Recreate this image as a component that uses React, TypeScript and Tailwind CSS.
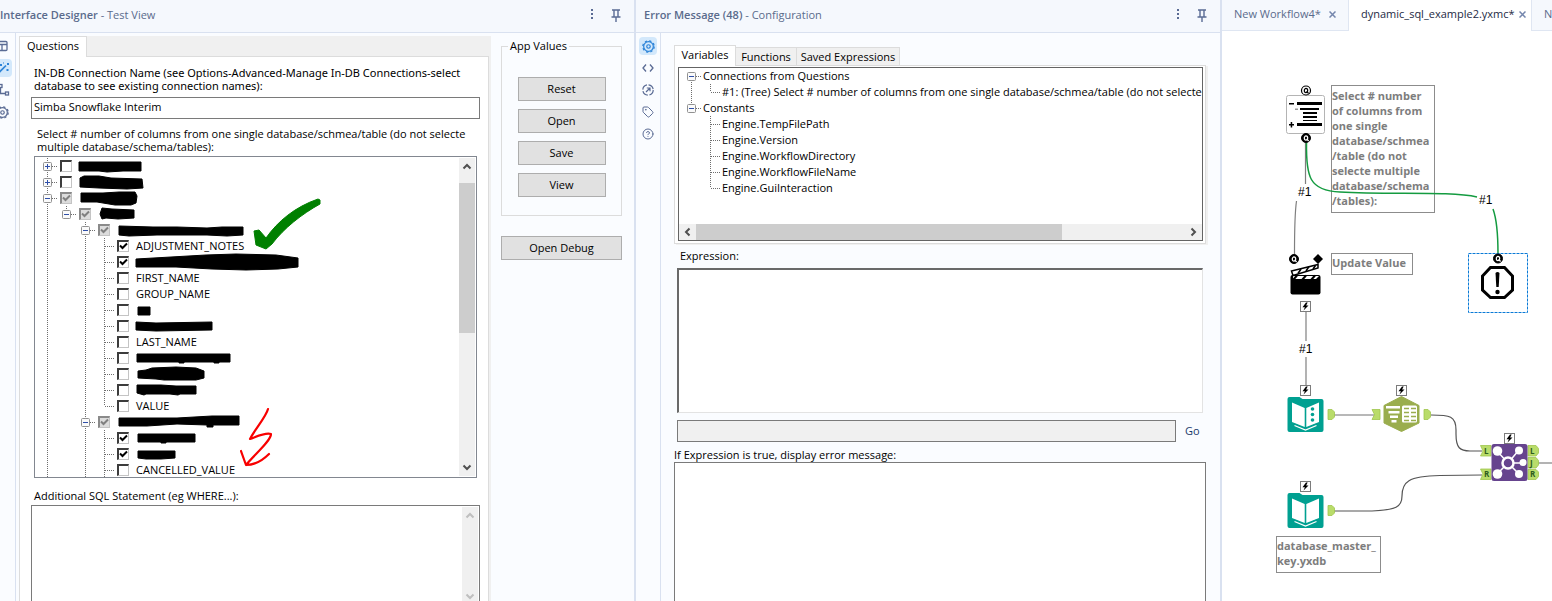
import React from "react";
import { Tag, CircleHelp } from "lucide-react";

/* ---------- small icons ---------- */

const Dots = () => (
  <svg width="4" height="12" viewBox="0 0 4 12" fill="#5a6b94">
    <rect x="1" y="1" width="2" height="2" />
    <rect x="1" y="5" width="2" height="2" />
    <rect x="1" y="9" width="2" height="2" />
  </svg>
);

const Pin = () => (
  <svg width="10" height="13" viewBox="0 0 10 13" fill="none" stroke="#5a6b94" strokeWidth="1.4">
    <path d="M1 1h8M3 1v6.5M7 1v6.5M.5 8h9M5 8v5" />
  </svg>
);

const Gear = ({ color, size }: { color: string; size: number }) => (
  <svg width={size} height={size} viewBox="0 0 14 14" fill="none" stroke={color} className="shrink-0">
    <circle cx="7" cy="7" r="5.2" strokeWidth="1.3" />
    <circle cx="7" cy="7" r="6.1" strokeWidth="1.4" strokeDasharray="2.4 2.4" />
    <circle cx="7" cy="7" r="1.9" strokeWidth="1.3" />
  </svg>
);

const LayoutIcon = () => (
  <svg width="12" height="12" viewBox="0 0 12 12" fill="none" stroke="#5a6b94" strokeWidth="1.3" className="shrink-0">
    <rect x="1" y="1.500" width="10" height="9" rx="1" />
    <path d="M1 4.500h10M6 4.500v6" />
  </svg>
);

const WandIcon = () => (
  <svg width="12" height="12" viewBox="0 0 12 12" fill="#2d84d8" stroke="#2d84d8" className="shrink-0">
    <path d="M1.500 11L9 3.500" strokeWidth="1.7" />
    <g stroke="none">
      <rect x="3" y="2" width="2" height="2" />
      <rect x="10" y="1" width="2" height="2" />
      <rect x="9.500" y="7" width="2" height="2" />
      <rect x="6" y="0.500" width="1" height="1" />
    </g>
  </svg>
);

const TreeIcon = () => (
  <svg width="14" height="14" viewBox="0 0 14 14" fill="none" stroke="#5a6b94" strokeWidth="1.3" className="shrink-0">
    <rect x="3" y="1.500" width="3" height="3" />
    <path d="M4.500 4.500v6h5" />
    <rect x="9.500" y="9" width="3" height="3" />
  </svg>
);

const CodeIcon = () => (
  <svg width="12" height="10" viewBox="0 0 12 10" fill="none" stroke="#5a6b94" strokeWidth="1.3">
    <path d="M4 1.500L1 5l3 3.500M8 1.500L11 5 8 8.500" />
  </svg>
);

const TargetIcon = () => (
  <svg width="12" height="12" viewBox="0 0 12 12" fill="none" stroke="#5a6b94" strokeWidth="1.2">
    <circle cx="6" cy="6" r="5.2" strokeDasharray="6.500 1.660" />
    <path d="M4 8l4-4M4.800 4H8v3.200" />
  </svg>
);

const Chevron = ({ dir, color = "#505050" }: { dir: "up" | "down" | "left" | "right"; color?: string }) => {
  const paths = {
    up: "M1.500 6.500L5 3l3.500 3.500",
    down: "M1.500 3.500L5 7l3.500-3.500",
    left: "M6.500 1.500L3 5l3.500 3.500",
    right: "M3.500 1.500L7 5 3.500 8.500",
  };
  return (
    <svg width="10" height="10" viewBox="0 0 10 10" fill="none" stroke={color} strokeWidth="2">
      <path d={paths[dir]} />
    </svg>
  );
};

/* ---------- tree parts ---------- */

type Cell = "none" | "v" | "tee" | "elbow" | "plus" | "minus" | "minusTop" | "minusEnd";

const TreeCell = ({ kind }: { kind: Cell }) => {
  const box = kind === "plus" || kind.startsWith("minus");
  const above = kind !== "none" && kind !== "minusTop";
  const below = ["v", "tee", "plus", "minus", "minusTop"].includes(kind);
  return (
    <svg width="19" height="16" viewBox="0 0 19 16" className="shrink-0 overflow-visible">
      <g stroke="#6e6e6e" strokeDasharray="1 1">
        {above && <path d="M9.500 0V8" />}
        {below && <path d="M9.500 8V16" />}
        {kind !== "none" && kind !== "v" && <path d="M10 8.500H20" />}
      </g>
      {box && (
        <>
          <rect x="5.500" y="4.500" width="8" height="8" rx="1" fill="#fafafa" stroke="#919191" />
          <path d="M7 8.500h5" stroke="#2f4fa8" />
          {kind === "plus" && <path d="M9.500 6v5" stroke="#2f4fa8" />}
        </>
      )}
    </svg>
  );
};

type Item = {
  cells: Cell[];
  check: "on" | "off" | "mixed";
  label?: string;
  mark?: string;
};

const leaf: Cell[] = ["v", "none", "v", "tee"];

const items: Item[] = [
  { cells: ["plus"], check: "off", mark: "M0 4H62V13H44L28 14 20 13H0Z" },
  { cells: ["plus"], check: "off", mark: "M1 4L5 2H20L32 4 63 5 64 14 48 15 20 14 1 13Z" },
  { cells: ["minus"], check: "mixed", mark: "M2 3L24 3 40 2 56 2 58 6 57 13 52 15 36 15 18 12 2 12Z" },
  { cells: ["v", "minusEnd"], check: "mixed", mark: "M4 2L14 3 36 4V12L20 13 8 12 4 13 2 8Z" },
  { cells: ["v", "none", "minus"], check: "mixed", mark: "M2 4L36 5 60 5 90 6 105 5 126 5V13L110 14 90 13 40 13 12 14 2 13Z" },
  { cells: leaf, check: "on", label: "ADJUSTMENT_NOTES" },
  { cells: leaf, check: "on", mark: "M0 5L35 3 70 1 100 0 140 1 162 4V13L142 15 110 16 76 15 40 13 0 13Z" },
  { cells: leaf, check: "off", label: "FIRST_NAME" },
  { cells: leaf, check: "off", label: "GROUP_NAME" },
  { cells: leaf, check: "off", mark: "M2 5H14V13H2Z" },
  { cells: leaf, check: "off", mark: "M0 4L20 5 76 4V12L20 13 0 12Z" },
  { cells: leaf, check: "off", label: "LAST_NAME" },
  { cells: leaf, check: "off", mark: "M1 4H94V12H83V13H78V12H48V13H43V12H1Z" },
  { cells: leaf, check: "off", mark: "M2 5L10 4 16 2 40 1 60 2 68 5V12L60 14 28 14 20 13 2 12Z" },
  { cells: leaf, check: "off", mark: "M1 3L25 3 40 4 60 4V12H44L42 13 34 12 10 12 8 13 1 11Z" },
  { cells: ["v", "none", "v", "elbow"], check: "off", label: "VALUE" },
  { cells: ["v", "none", "minus"], check: "mixed", mark: "M3 4L60 4 95 2 122 2V11H96V13H90V11L60 10 30 12 2 12V4Z" },
  { cells: leaf, check: "on", mark: "M2 4H59V12H30V13H25V12H2Z" },
  { cells: leaf, check: "on", mark: "M2 5H39V12L25 13 10 13 2 12Z" },
  { cells: leaf, check: "off", label: "CANCELLED_VALUE" },
];

const TickBox = ({ state, name }: { state: Item["check"]; name: string }) => (
  <span className="relative flex h-4 w-[18px] shrink-0 items-center justify-center">
    <input
      type="checkbox"
      aria-label={name}
      defaultChecked={state !== "off"}
      className={
        state === "mixed"
          ? "size-3 appearance-none border-t-2 border-l-2 border-r border-b border-[#8a8a8a] border-r-[#c4c4c4] border-b-[#c4c4c4] bg-[#dcdcdc]"
          : "size-3 appearance-none border-t-2 border-l-2 border-r border-b border-[#3c3c3c] border-r-[#c4c4c4] border-b-[#c4c4c4] bg-white"
      }
    />
    {state !== "off" && (
      <svg
        width="18"
        height="16"
        viewBox="0 0 18 16"
        fill="none"
        stroke={state === "mixed" ? "#808080" : "#000"}
        strokeWidth="2"
        className="pointer-events-none absolute inset-0"
      >
        <path d="M6 7.500L8.500 10l4.500-4.500" />
      </svg>
    )}
  </span>
);

const ColumnTree = () => (
  <div className="relative mr-[11px] ml-[14px] flex h-[322px] overflow-hidden border border-[#828790] bg-white">
    <ul className="min-w-0 flex-1 pt-px pl-[3px]">
      {items.map((it, i) => (
        <li key={i} className="flex h-4 items-center">
          {it.cells.map((c, j) => (
            <TreeCell key={j} kind={c} />
          ))}
          <TickBox state={it.check} name={it.label ?? "Hidden entry"} />
          <span className="pl-1 leading-4 whitespace-nowrap">
            {it.label ?? (
              <svg width="160" height="16" viewBox="0 0 160 16" className="overflow-visible">
                <path d={it.mark} stroke="#000" strokeLinejoin="round" />
              </svg>
            )}
          </span>
        </li>
      ))}
    </ul>
    <div className="my-px mr-px flex w-4 flex-col items-center bg-[#f0f0f0]">
      <div className="flex h-[25px] items-start pt-1">
        <Chevron dir="up" />
      </div>
      <div className="h-[150px] w-full bg-[#cdcdcd]" />
      <div className="mt-auto pb-1">
        <Chevron dir="down" />
      </div>
    </div>
    <svg width="110" height="280" viewBox="0 0 110 280" fill="none" className="pointer-events-none absolute top-[38px] left-[205px]">
      <path
        d="M14 36L19 35 26 43C38 26 55 12 78 4L80 5V9C62 19 44 33 32 49L26 54 16 50Z"
        fill="#008000"
        stroke="#008000"
        strokeWidth="1"
      />
      <path
        d="M28 214C26 222 15 234 10 244C18 241 26 237 31 239C31 246 14 260 6 270L1 256M6 270C16 270 24 264 29 259"
        stroke="#f80000"
        strokeWidth="2.200"
        strokeLinecap="round"
        strokeLinejoin="round"
      />
    </svg>
  </div>
);

/* ---------- panels ---------- */

const PanelHeader = ({ title, sub, pad }: { title: string; sub: string; pad: string }) => (
  <header className={`flex h-[33px] shrink-0 items-center border-b border-[#d9e1f0] bg-[#f5f8fd] pr-[13px] text-[#5a6b8c] ${pad}`}>
    <h2 className="flex-1 pb-[2px] text-[11px] leading-4 font-semibold">
      {title} <span className="font-normal">- {sub}</span>
    </h2>
    <button aria-label="More options" className="mr-[17px] pb-1">
      <Dots />
    </button>
    <button aria-label="Pin panel" className="pb-px">
      <Pin />
    </button>
  </header>
);

const PushButton = ({ children, wide }: { children: string; wide?: boolean }) => (
  <button
    className={
      wide
        ? "h-6 w-full border border-[#adadad] bg-[#e1e1e1] leading-4"
        : "h-6 w-[88px] border border-[#adadad] bg-[#e1e1e1] leading-4"
    }
  >
    {children}
  </button>
);

const DesignerPanel = () => (
  <section className="flex min-w-0 flex-col border-r-2 border-[#d9e1f0] bg-[#fafcff]">
    <PanelHeader title="Interface Designer" sub="Test View" pad="pl-0" />
    <div className="flex min-h-0 flex-1">
      <nav className="flex w-4 shrink-0 flex-col items-end gap-1 border-r border-[#d9e1f0] pt-1 pr-[3px]">
        <button aria-label="Layout view" className="flex h-[18px] w-3 items-center justify-end pr-1"><LayoutIcon /></button>
        <button aria-label="Test view" className="flex h-[18px] w-3 items-center justify-end rounded-r-sm bg-[#d3e8fb] pr-[3px]"><WandIcon /></button>
        <button aria-label="Tree view" className="flex h-[18px] w-3 items-center justify-end pr-[2px]"><TreeIcon /></button>
        <button aria-label="Properties" className="flex h-[18px] w-3 items-center justify-end pr-[3px]"><Gear color="#5a6b94" size={13} /></button>
      </nav>
      <div className="mt-[3px] ml-[3px] flex min-w-0 flex-1 flex-col bg-[#f0f0f0] pr-[2px]">
        <div className="flex h-5" role="tablist">
          <button role="tab" aria-selected="true" className="relative z-10 -mb-px h-[21px] w-[68px] border border-b-0 border-[#dcdcdc] bg-white pb-[2px] leading-4">
            Questions
          </button>
        </div>
        <div className="flex min-h-0 flex-1 flex-col border border-b-0 border-[#dcdcdc] bg-white">
          <label htmlFor="conn" className="pt-[9px] pr-2 pl-[14px] font-['Noto_Sans','Open_Sans',sans-serif] leading-[13px]">
            IN-DB Connection Name (see Options-Advanced-Manage In-DB Connections-select
            <br />
            database to see existing connection names):
          </label>
          <input
            id="conn"
            defaultValue="Simba Snowflake Interim"
            className="mt-[5px] mr-2 ml-[11px] h-[22px] border border-[#7a7a7a] bg-white px-[2px] pb-[3px]"
          />
          <p className="pt-2 pb-[3px] pl-[17px] leading-[13px]">
            Select # number of columns from one single database/schmea/table (do not selecte
            <br />
            multiple database/schema/tables):
          </p>
          <ColumnTree />
          <label htmlFor="sql" className="pt-[11px] pb-[3px] pl-[14px] leading-[13px]">
            Additional SQL Statement (eg WHERE...):
          </label>
          <div className="mr-2 ml-[11px] flex min-h-0 flex-1 border border-b-0 border-[#7a7a7a] bg-white">
            <textarea id="sql" className="min-w-0 flex-1 resize-none p-1" />
            <div className="mt-px mr-px flex w-4 flex-col items-center justify-between bg-[#f0f0f0] pt-1">
              <Chevron dir="up" color="#bfbfbf" />
              <Chevron dir="down" color="#bfbfbf" />
            </div>
          </div>
        </div>
      </div>
      <aside className="flex w-[143px] shrink-0 flex-col gap-5 pt-[5px] pr-3 pl-[10px]">
        <fieldset className="flex h-[178px] flex-col items-center gap-2 border border-[#dcdcdc] pt-[23px]">
          <legend className="ml-[6px] px-[2px] leading-4">App Values</legend>
          <PushButton>Reset</PushButton>
          <PushButton>Open</PushButton>
          <PushButton>Save</PushButton>
          <PushButton>View</PushButton>
        </fieldset>
        <PushButton wide>Open Debug</PushButton>
      </aside>
    </div>
  </section>
);

const variables: { cells: Cell[]; label: string }[] = [
  { cells: ["minusTop"], label: "Connections from Questions" },
  {
    cells: ["v", "elbow"],
    label: "#1: (Tree) Select # number of columns from one single database/schmea/table (do not selecte",
  },
  { cells: ["minusEnd"], label: "Constants" },
  { cells: ["none", "tee"], label: "Engine.TempFilePath" },
  { cells: ["none", "tee"], label: "Engine.Version" },
  { cells: ["none", "tee"], label: "Engine.WorkflowDirectory" },
  { cells: ["none", "tee"], label: "Engine.WorkflowFileName" },
  { cells: ["none", "elbow"], label: "Engine.GuiInteraction" },
];

const ConfigPanel = () => (
  <section className="flex min-w-0 flex-col border-r-2 border-[#d9e1f0] bg-[#fafcff]">
    <PanelHeader title="Error Message (48)" sub="Configuration" pad="pl-2" />
    <div className="flex min-h-0 flex-1">
      <nav className="flex w-[25px] shrink-0 flex-col items-center gap-1 border-r border-[#d9e1f0] pt-1 text-[#5a6b94]">
        <button aria-label="Configuration" className="flex size-[18px] items-center justify-center rounded-sm bg-[#d3e8fb]"><Gear color="#2d84d8" size={13} /></button>
        <button aria-label="XML view" className="flex size-[18px] items-center justify-center"><CodeIcon /></button>
        <button aria-label="Navigation" className="flex size-[18px] items-center justify-center"><TargetIcon /></button>
        <button aria-label="Annotation" className="flex size-[18px] items-center justify-center"><Tag size={12} /></button>
        <button aria-label="Help" className="flex size-[18px] items-center justify-center"><CircleHelp size={12} /></button>
      </nav>
      <div className="flex min-w-0 flex-1 flex-col pt-3 pr-[14px] pl-[13px]">
        <div className="flex items-end" role="tablist">
          <button role="tab" aria-selected="true" className="relative z-10 -mb-px h-[21px] w-[62px] border border-b-0 border-[#dcdcdc] bg-white pb-[2px] leading-4">Variables</button>
          <button role="tab" aria-selected="false" className="h-[18px] w-[61px] border border-b-0 border-l-0 border-[#dcdcdc] bg-[#f0f0f0] leading-4">Functions</button>
          <button role="tab" aria-selected="false" className="h-[18px] w-[103px] border border-b-0 border-l-0 border-[#dcdcdc] bg-[#f0f0f0] leading-4">Saved Expressions</button>
        </div>
        <div className="border border-[#dcdcdc] bg-white pt-px pr-[2px] pb-[2px] pl-[3px] shadow-[2px_1px_0_#f0f0f0]">
          <div className="flex h-[174px] flex-col overflow-hidden border border-[#646464] bg-white">
            <ul className="min-h-0 flex-1 pl-[3px]">
              {variables.map((v) => (
                <li key={v.label} className="flex h-4 items-center">
                  {v.cells.map((c, j) => (
                    <TreeCell key={j} kind={c} />
                  ))}
                  <span className="pl-[2px] leading-4 whitespace-nowrap">{v.label}</span>
                </li>
              ))}
            </ul>
            <div className="flex h-4 items-center bg-[#f0f0f0]">
              <div className="flex w-[17px] justify-center">
                <Chevron dir="left" />
              </div>
              <div className="h-full w-[70%] bg-[#cdcdcd]" />
              <div className="mr-1 ml-auto">
                <Chevron dir="right" />
              </div>
            </div>
          </div>
        </div>
        <label htmlFor="expr" className="pt-[5px] pb-[6px] pl-[6px] leading-[13px]">
          Expression:
        </label>
        <textarea
          id="expr"
          className="mr-[3px] ml-[3px] h-[145px] resize-none border-t-2 border-r border-b border-l-2 border-t-[#696969] border-r-[#e3e3e3] border-b-[#e3e3e3] border-l-[#696969] bg-white p-1"
        />
        <div className="mt-[7px] ml-[3px] flex items-center">
          <input aria-label="Test result" readOnly className="h-[22px] min-w-0 flex-1 border border-[#7a7a7a] bg-[#f0f0f0]" />
          <a href="#go" className="w-[30px] pl-[9px] leading-4 text-[#1a3a6b]">
            Go
          </a>
        </div>
        <label htmlFor="err" className="pt-[6px] pb-px leading-[13px]">
          If Expression is true, display error message:
        </label>
        <textarea id="err" className="min-h-0 flex-1 resize-none border border-b-0 border-[#7a7a7a] bg-white p-1" />
      </div>
    </div>
  </section>
);

/* ---------- workflow canvas ---------- */

const QAnchor = ({ x, y, light }: { x: number; y: number; light?: boolean }) => (
  <g transform={`translate(${x} ${y})`} fill="none">
    <circle r="4.500" fill={light ? "#fff" : "#000"} stroke="#000" strokeWidth={light ? 1.2 : 1} />
    <ellipse rx="1.700" ry="2.100" stroke={light ? "#000" : "#fff"} strokeWidth="1.200" />
    <path d="M.6 .8L2.600 3" stroke={light ? "#000" : "#fff"} strokeWidth="1.200" />
  </g>
);

const Bolt = ({ x, y }: { x: number; y: number }) => (
  <g transform={`translate(${x} ${y})`}>
    <rect x="-5" y="-5" width="10" height="10" fill="#fff" stroke="#7c7c7c" />
    <path d="M.5-4L-3 .8H-.6L-2 4 3-1H.6L2.200-4Z" fill="#000" />
  </g>
);

const OutPort = ({ x, y }: { x: number; y: number }) => (
  <path transform={`translate(${x} ${y})`} d="M-3-5H1L3.500-2.500V2.500L1 5H-3Z" fill="#b9dc6a" stroke="#9fc54d" strokeWidth=".8" />
);

const InPort = ({ x, y }: { x: number; y: number }) => (
  <path transform={`translate(${x} ${y})`} d="M-4-5H4V5H-4L-1.500 0Z" fill="#b9dc6a" stroke="#9fc54d" strokeWidth=".8" />
);

const Book = ({ x, y, dots }: { x: number; y: number; dots?: boolean }) => (
  <g transform={`translate(${x} ${y})`}>
    <path d="M2 0H12L15 2H34Q36 2 36 4V33Q36 35 34 35H2Q0 35 0 33V2Q0 0 2 0Z" fill="#00a091" />
    <path d="M4.500 5.500L17.200 11V30L4.500 25ZM31.500 5.500L18.800 11V30L31.500 25Z" fill="#fff" />
    <path d="M7 27L18 32 29 27" fill="none" stroke="#00a091" strokeWidth="1.200" />
    <path d="M7 28.500L18 33 29 28.500" fill="none" stroke="#fff" strokeWidth="1.300" />
    {dots && (
      <g fill="#00a091">
        <circle cx="25" cy="12" r="1.800" />
        <circle cx="25" cy="17.500" r="1.800" />
        <circle cx="25" cy="23" r="1.800" />
      </g>
    )}
  </g>
);

const Canvas = () => (
  <div className="relative min-h-0 flex-1 overflow-hidden bg-white">
    <div className="absolute top-[54px] left-[109px] w-[104px] border border-[#8c8c8c] bg-white pt-[2px] pb-1 text-[11px] leading-[15px] font-bold whitespace-nowrap text-[#7d7d7d]">
      Select # number<br />of columns from<br />one single<br />database/schmea<br />/table (do not<br />selecte multiple<br />database/schema<br />/tables):
    </div>
    <div className="absolute top-[222px] left-[109px] w-[82px] border border-[#8c8c8c] bg-white pt-px pb-1 text-[11px] leading-[15px] font-bold whitespace-nowrap text-[#7d7d7d]">
      Update Value
    </div>
    <div className="absolute top-[505px] left-[54px] w-[105px] border border-[#8c8c8c] bg-white pt-px pb-1 text-[11px] leading-[15px] font-bold whitespace-nowrap text-[#7d7d7d]">
      database_master_<br />key.yxdb
    </div>
    <svg width="330" height="570" viewBox="1222 31 330 570" fill="none" className="absolute top-0 left-0">
      {/* connections */}
      <g stroke="#7f7f7f" strokeWidth="1.200">
        <path d="M1305.500 143V184M1296.500 201C1294.500 215 1294.500 235 1294.500 254" />
        <path d="M1306 312V341M1306 357V385" stroke="#a0a0a0" strokeWidth="1.600" />
        <path d="M1334 415H1376" stroke="#a0a0a0" strokeWidth="1.600" />
        <path d="M1431 415C1450 415 1456 416 1456 430V434C1456 448 1460 451 1470 451H1482" stroke="#555" />
        <path d="M1334 511H1372C1396 510 1402 507 1402 496C1402 482 1408 476 1440 475.500L1482 475" stroke="#555" />
        <path d="M1538 463H1552" stroke="#a0a0a0" strokeWidth="1.600" />
      </g>
      <g stroke="#149b40" strokeWidth="1.500">
        <path d="M1306.500 143C1306 176 1309 191 1340 192C1390 195 1450 191 1477 197" />
        <path d="M1493 209C1497 220 1498 235 1498 254" />
      </g>

      {/* tree question tool */}
      <rect x="1286.500" y="95.500" width="38" height="38" rx="2" fill="#fff" stroke="#b4b4b4" />
      <g fill="#000">
        <rect x="1297" y="102" width="25" height="3" />
        <rect x="1300" y="108" width="19" height="2" />
        <rect x="1303" y="112" width="14" height="2" />
        <rect x="1303" y="116" width="14" height="2" />
        <rect x="1303" y="120" width="14" height="1" />
        <rect x="1297" y="123" width="25" height="3" />
        <rect x="1289" y="103" width="5" height="1.500" />
        <rect x="1289" y="124" width="5" height="1.500" />
        <rect x="1290.700" y="122" width="1.500" height="5.500" />
        <rect x="1295" y="108.500" width="3" height="1.500" fill="#999" />
      </g>
      <QAnchor x={1306} y={90.5} light />
      <QAnchor x={1306} y={138} />

      {/* action tool */}
      <g>
        <rect x="1290.500" y="275" width="30" height="19.500" rx="2" fill="#000" />
        <path d="M1293 276H1319L1316 279H1293Z" fill="#fff" />
        <path d="M1293 280l4-4.500M1302 280l4-4.500M1311 280l4-4.500" stroke="#000" strokeWidth="2" />
        <path d="M1291.500 271L1318 264.500V268L1293 275.500Z" fill="#fff" stroke="#000" strokeWidth="1.500" />
        <path d="M1298 273.500l3-4.500M1306 271l3-4.500M1313 269l2.500-3.500" stroke="#000" strokeWidth="1.600" />
        <path d="M1313 259l5-5 5 5-5 5Z" fill="#000" />
      </g>
      <QAnchor x={1294} y={259} />
      <Bolt x={1305.5} y={306.5} />

      {/* error message tool */}
      <rect x="1468.500" y="253.500" width="59" height="59" stroke="#0a7ad6" strokeDasharray="3 1" />
      <path d="M1490.500 267.500H1504.500L1512.500 276V290L1504.500 297.500H1490.500L1482.500 290V276Z" stroke="#000" strokeWidth="3" />
      <path d="M1495.500 273Q1497.500 271 1499.500 273L1498.700 287H1496.300Z" fill="#000" />
      <circle cx="1497.500" cy="292" r="2.200" fill="#000" />
      <QAnchor x={1498} y={258.5} />

      {/* input tools */}
      <Book x={1287.5} y={397} dots />
      <Book x={1287.5} y={493} />
      <Bolt x={1305.5} y={390.5} />
      <Bolt x={1305.5} y={486.5} />
      <OutPort x={1331} y={414.5} />
      <OutPort x={1331} y={510.5} />

      {/* select tool */}
      <InPort x={1376} y={414.5} />
      <OutPort x={1427} y={414.5} />
      <path d="M1401.500 396.500L1419 405.500V423L1401.500 431.500 1384 423V405.500Z" fill="#9aad4e" stroke="#9aad4e" strokeLinejoin="round" />
      <path d="M1386 406h14v2.500h-14zM1388.500 411h11v2.500h-11zM1390 415.500h8v2.500h-8zM1391.500 420h5v2.500h-5z" fill="#fff" />
      <rect x="1402" y="405.500" width="15" height="17" rx="1.500" fill="#fff" />
      <path d="M1404 408.500h5M1411 408.500h5M1404 412.500h5M1411 412.500h5M1404 416.500h5M1411 416.500h5M1404 420.500h5M1411 420.500h5" stroke="#9aad4e" strokeWidth="1.600" />
      <Bolt x={1401.5} y={390.5} />

      {/* join tool */}
      <path d="M1480.500 445.500H1491V456H1480.500L1483 451ZM1480.500 469H1491V479.500H1480.500L1483 474Z" fill="#b9dc6a" stroke="#9fc54d" strokeWidth=".8" />
      <path d="M1528 445.500H1536L1538.500 448.500V453L1536 456H1528ZM1528 457.500H1536L1538.500 460.500V465L1536 468H1528ZM1528 469.500H1536L1538.500 472V476.500L1536 479.500H1528Z" fill="#b9dc6a" stroke="#9fc54d" strokeWidth=".8" />
      <rect x="1491.500" y="444" width="36" height="37" rx="2.500" fill="#66448e" />
      <path d="M1497 451L1508 463 1497 474M1519 450L1508 463 1519 474M1508 463H1523" stroke="#fff" strokeWidth="1.500" />
      <circle cx="1508" cy="463" r="5.500" fill="#66448e" stroke="#fff" strokeWidth="2.500" />
      <g fill="#fff">
        <circle cx="1497.500" cy="451" r="4.800" />
        <circle cx="1497.500" cy="474" r="4.800" />
        <circle cx="1519" cy="450.500" r="4" />
        <circle cx="1519" cy="474" r="4" />
        <circle cx="1523" cy="462.500" r="3.500" />
      </g>
      <Bolt x={1509.5} y={438.5} />
    </svg>
    <span className="absolute top-[153px] left-[76px] font-['Liberation_Sans',sans-serif] text-xs leading-4 text-black">#1</span>
    <span className="absolute top-[161px] left-[257px] font-['Liberation_Sans',sans-serif] text-xs leading-4 text-black">#1</span>
    <span className="absolute top-[310px] left-[77px] font-['Liberation_Sans',sans-serif] text-xs leading-4 text-black">#1</span>
    <span className="absolute top-[415px] left-[262px] text-[8px] leading-[10px] font-bold text-[#2f5d1e]">L</span>
    <span className="absolute top-[438px] left-[262px] text-[8px] leading-[10px] font-bold text-[#2f5d1e]">R</span>
    <span className="absolute top-[415px] left-[308px] text-[8px] leading-[10px] font-bold text-[#2f5d1e]">L</span>
    <span className="absolute top-[427px] left-[308px] text-[8px] leading-[10px] font-bold text-[#2f5d1e]">J</span>
    <span className="absolute top-[438px] left-[308px] text-[8px] leading-[10px] font-bold text-[#2f5d1e]">R</span>
  </div>
);

const CloseX = () => (
  <svg width="7" height="7" viewBox="0 0 7 7" stroke="#7486ad" strokeWidth="1.500">
    <path d="M.5.5l6 6M6.500.5l-6 6" />
  </svg>
);

const WorkflowPane = () => (
  <section className="flex min-w-0 flex-col overflow-hidden">
    <div className="flex h-[31px] shrink-0 text-[#5a6b8c]" role="tablist">
      <div className="flex w-[127px] shrink-0 items-center gap-2 border-r border-b border-[#dfe6f2] bg-[#f5f8fd] pb-[2px] pl-3 whitespace-nowrap">
        <button role="tab" aria-selected="false" className="leading-4">New Workflow4*</button>
        <button aria-label="Close New Workflow4"><CloseX /></button>
      </div>
      <div className="flex w-[182px] shrink-0 items-center gap-1 bg-white pb-[3px] pl-3 whitespace-nowrap text-[#1d2a44]">
        <button role="tab" aria-selected="true" className="leading-4">dynamic_sql_example2.yxmc*</button>
        <button aria-label="Close dynamic_sql_example2"><CloseX /></button>
      </div>
      <div className="flex flex-1 items-center overflow-hidden border-b border-l border-[#dfe6f2] bg-[#f5f8fd] pb-[2px] pl-3">
        <button role="tab" aria-selected="false" className="leading-4">N</button>
      </div>
    </div>
    <Canvas />
  </section>
);

export default function App() {
  return (
    <main className="grid h-screen grid-cols-[636fr_586fr_330fr] overflow-hidden bg-white font-['Open_Sans','Noto_Sans',sans-serif] text-[11px] text-black">
      <DesignerPanel />
      <ConfigPanel />
      <WorkflowPane />
    </main>
  );
}
